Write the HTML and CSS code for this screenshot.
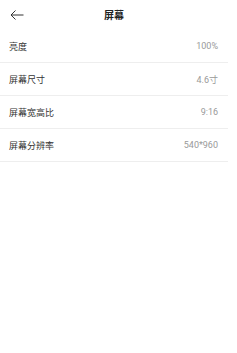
FILE: index.html
```
<!DOCTYPE html>
<html lang="zh">
<head>
<meta charset="utf-8">
<link rel="stylesheet" href="styles.css">
</head>
<body>
<div class="page">
  <header class="bar">
    <span class="back">
      <svg width="14" height="10" viewBox="0 0 14 10"><path d="M13.5 5H1M5.5 0.5L1 5l4.5 4.5" fill="none" stroke="#333" stroke-width="1"/></svg>
    </span>
    <h1 class="title">屏幕</h1>
  </header>
  <div class="list">
    <div class="row"><span class="label">亮度</span><span class="value">100%</span></div>
    <div class="row"><span class="label">屏幕尺寸</span><span class="value">4.6寸</span></div>
    <div class="row"><span class="label">屏幕宽高比</span><span class="value">9:16</span></div>
    <div class="row"><span class="label">屏幕分辨率</span><span class="value">540*960</span></div>
  </div>
</div>
</body>
</html>
```
FILE: styles.css
```
html, body { margin: 0; padding: 0; background: #fff; }
body { font-family: Roboto, "Noto Sans CJK SC", sans-serif; }
.page { width: 228px; }
.bar { height: 30px; position: relative; display: flex; align-items: center; justify-content: center; }
.back { position: absolute; left: 10px; top: 10px; display: flex; }
.title { margin: 0; font-size: 10px; font-weight: 700; color: #222; line-height: 1; margin-top: 1px; }
.row { height: 32px; border-bottom: 1px solid #eeeeee; display: flex; align-items: center; justify-content: space-between; padding: 0 10px 0 9px; }
.label { font-size: 9px; color: #333; }
.value { font-size: 9px; color: #999; }
```
